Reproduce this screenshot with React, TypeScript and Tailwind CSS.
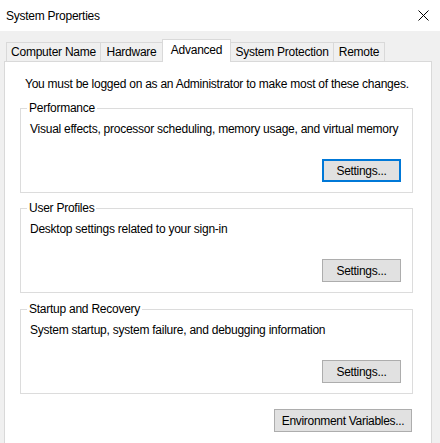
import React from 'react'

const tabs = [
  { label: 'Computer Name', width: 'w-[95px]' },
  { label: 'Hardware', width: 'w-[63px]' },
  { label: 'Advanced', width: 'w-[69px]', active: true },
  { label: 'System Protection', width: 'w-[104px]' },
  { label: 'Remote', width: 'w-[52px]' },
]

const groups = [
  {
    title: 'Performance',
    text: 'Visual effects, processor scheduling, memory usage, and virtual memory',
    focused: true,
    spacing: 'mt-0',
  },
  {
    title: 'User Profiles',
    text: 'Desktop settings related to your sign-in',
    spacing: 'mt-[7px]',
  },
  {
    title: 'Startup and Recovery',
    text: 'System startup, system failure, and debugging information',
    spacing: 'mt-[8px]',
  },
]

// Windows-style push button
const Button: React.FC<{ label: string; focused?: boolean; className?: string }> = ({
  label,
  focused,
  className = '',
}) => (
  <button
    className={`h-[23px] bg-[#e1e1e1] text-[12px] leading-none tracking-[-0.3px] text-black ${
      focused ? 'border-2 border-[#0078d7]' : 'border border-[#adadad]'
    } ${className}`}
  >
    {label}
  </button>
)

export default function App() {
  return (
    <div
      className="flex h-[443px] w-[440px] flex-col overflow-hidden bg-[#f0f0f0] text-[12px] leading-[16px] tracking-[-0.25px] text-black"
      style={{ fontFamily: '"Liberation Sans", Arial, sans-serif' }}
    >
      {/* Title bar */}
      <div className="flex h-[31px] shrink-0 items-center justify-between bg-white pl-[6px] pr-[11px]">
        <span className="text-[12px]">System Properties</span>
        <svg width="11" height="11" viewBox="0 0 11 11" className="text-black">
          <path d="M0.5 0.5 L10.5 10.5 M10.5 0.5 L0.5 10.5" stroke="currentColor" strokeWidth="1" />
        </svg>
      </div>

      {/* Tabs */}
      <div className="ml-[6px] mt-[8px] flex h-[22px] shrink-0 items-end">
        {tabs.map((t) =>
          t.active ? (
            <div
              key={t.label}
              className={`relative z-10 -mb-px -ml-px flex h-[23px] items-start justify-center border-x border-t border-[#d9d9d9] bg-white pt-[2px] ${t.width}`}
            >
              {t.label}
            </div>
          ) : (
            <div
              key={t.label}
              className={`-ml-px flex h-[19px] items-center justify-center border-x border-t border-[#d9d9d9] bg-[#f0f0f0] first:ml-0 ${t.width}`}
            >
              {t.label}
            </div>
          )
        )}
      </div>

      {/* Panel */}
      <div className="ml-[4px] flex w-[428px] flex-1 flex-col border-x border-t border-[#d9d9d9] bg-white pb-0 pl-[15px] pr-[18px] pt-[14px]">
        <p className="ml-[5px] whitespace-nowrap">
          You must be logged on as an Administrator to make most of these changes.
        </p>

        <div className="mt-[8px] flex flex-col">
          {groups.map((g) => (
            <fieldset
              key={g.title}
              className={`h-[93px] border border-[#dcdcdc] pl-[9px] pr-[11px] ${g.spacing}`}
            >
              <legend className="-ml-[3px] px-[2px] leading-[16px]">{g.title}</legend>
              <p className="mt-[5px] whitespace-nowrap">{g.text}</p>
              <div className="mt-[22px] flex justify-end">
                <Button label="Settings..." focused={g.focused} className="w-[79px]" />
              </div>
            </fieldset>
          ))}
        </div>

        <div className="mt-[15px] flex justify-end pr-[1px]">
          <Button label="Environment Variables..." className="w-[138px]" />
        </div>
      </div>
    </div>
  )
}
